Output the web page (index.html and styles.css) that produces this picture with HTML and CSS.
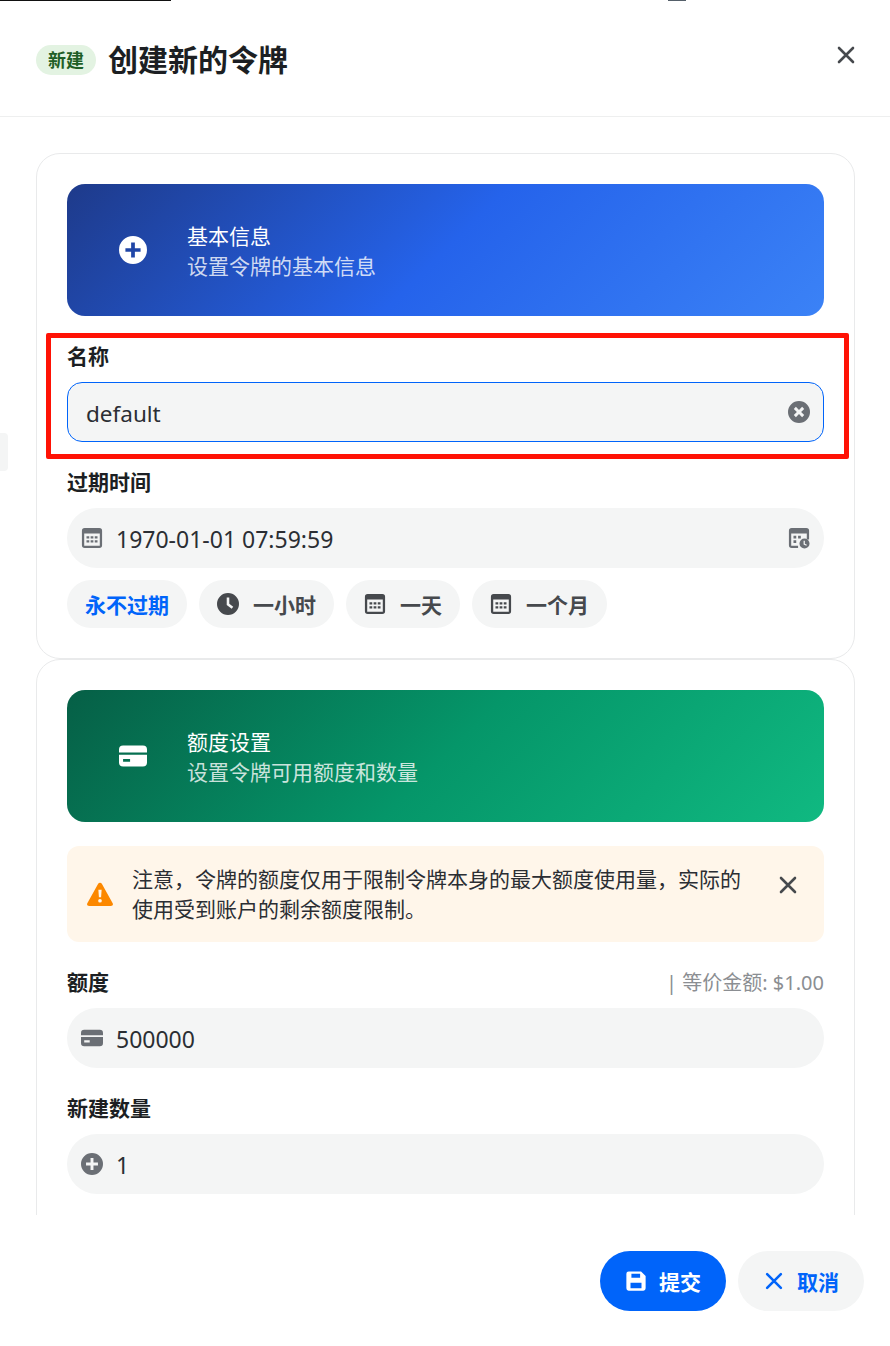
FILE: index.html
```html
<!DOCTYPE html>
<html lang="zh">
<head>
    <meta charset="UTF-8">
    <meta name="viewport" content="width=device-width, initial-scale=1">
    <title>创建新的令牌</title>
    <link rel="stylesheet" href="styles.css">
</head>
<body>

    <!-- page behind the side sheet -->
    <div class="behind-line"></div>
    <div class="behind-mark"></div>
    <div class="behind-tab"></div>

    <div class="sheet">
        <header class="sheet-header">
            <span class="tag-new">新建</span>
            <h1>创建新的令牌</h1>
            <button class="btn-close" type="button" aria-label="关闭">
                <svg viewBox="0 0 24 24" class="icon-close"><path d="M5 5l14 14M19 5L5 19"/></svg>
            </button>
        </header>

        <div class="sheet-body">
            <section class="card">
                <div class="banner banner-blue">
                    <svg viewBox="0 0 24 24" class="banner-icon"><path fill-rule="evenodd" d="M12 0a12 12 0 1 1 0 24a12 12 0 0 1 0-24zM10.400 5.500v4.900H5.500v3.200h4.900v4.900h3.200v-4.900h4.900v-3.200h-4.900V5.500z"/></svg>
                    <div class="banner-text">
                        <div class="banner-title">基本信息</div>
                        <div class="banner-sub">设置令牌的基本信息</div>
                    </div>
                </div>

                <div class="field">
                    <label class="field-label">名称</label>
                    <div class="input-wrap input-focus">
                        <input type="text" value="default">
                        <svg viewBox="0 0 24 24" class="icon-clear"><path fill-rule="evenodd" d="M12 1a11 11 0 1 1 0 22a11 11 0 0 1 0-22zM8.900 6.800L6.800 8.900 9.900 12l-3.100 3.100 2.100 2.100 3.100-3.100 3.100 3.100 2.100-2.100-3.100-3.100 3.100-3.100-2.100-2.100L12 9.900z"/></svg>
                    </div>
                </div>

                <div class="field">
                    <label class="field-label">过期时间</label>
                    <div class="input-wrap">
                        <svg viewBox="0 0 24 24" class="icon-prefix"><use href="#calendar"/></svg>
                        <input type="text" value="1970-01-01 07:59:59">
                        <svg viewBox="0 0 24 24" class="icon-suffix"><path fill-rule="evenodd" d="M4 1h16a3 3 0 0 1 3 3v9.500h-2.500V7h-17v13.500H11V23H4a3 3 0 0 1-3-3V4a3 3 0 0 1 3-3zM6 9.500h3v3H6zM11 9.500h3v3h-3zM6 14.500h3v3H6z"/><path fill-rule="evenodd" d="M18 12.500a5.500 5.500 0 1 1 0 11a5.500 5.500 0 0 1 0-11zM17 15v4l3 1.500.6-1.200-2.200-1.100V15z"/></svg>
                    </div>
                    <div class="chips">
                        <button type="button" class="chip chip-active">永不过期</button>
                        <button type="button" class="chip">
                            <svg viewBox="0 0 24 24"><path fill-rule="evenodd" d="M12 0a12 12 0 1 1 0 24a12 12 0 0 1 0-24zM10.600 5v8l5.400 4.200 1.700-2.200-4.300-3.300V5z"/></svg>
                            一小时
                        </button>
                        <button type="button" class="chip">
                            <svg viewBox="0 0 24 24"><use href="#calendar"/></svg>
                            一天
                        </button>
                        <button type="button" class="chip">
                            <svg viewBox="0 0 24 24"><use href="#calendar"/></svg>
                            一个月
                        </button>
                    </div>
                </div>
            </section>

            <section class="card card-last">
                <div class="banner banner-green">
                    <svg viewBox="0 0 24 24" class="banner-icon"><use href="#creditcard"/></svg>
                    <div class="banner-text">
                        <div class="banner-title">额度设置</div>
                        <div class="banner-sub">设置令牌可用额度和数量</div>
                    </div>
                </div>

                <div class="notice">
                    <svg viewBox="0 0 24 24" class="notice-icon"><path fill-rule="evenodd" d="M12 1.500c.7 0 1.300.4 1.700 1l10 18c.7 1.300-.2 2.500-1.700 2.500H2c-1.500 0-2.400-1.200-1.700-2.500l10-18c.4-.6 1-1 1.700-1zM10.500 8l.5 7h2l.5-7zM12 16.500a1.700 1.700 0 1 0 0 3.400a1.700 1.700 0 0 0 0-3.400z"/></svg>
                    <p>注意，令牌的额度仅用于限制令牌本身的最大额度使用量，实际的使用受到账户的剩余额度限制。</p>
                    <svg viewBox="0 0 24 24" class="icon-close notice-close"><path d="M5 5l14 14M19 5L5 19"/></svg>
                </div>

                <div class="field">
                    <div class="label-row">
                        <label class="field-label">额度</label>
                        <span class="label-extra">| 等价金额: $1.00</span>
                    </div>
                    <div class="input-wrap">
                        <svg viewBox="0 0 24 24" class="icon-prefix"><use href="#creditcard"/></svg>
                        <input type="text" value="500000">
                    </div>
                </div>

                <div class="field">
                    <label class="field-label">新建数量</label>
                    <div class="input-wrap">
                        <svg viewBox="0 0 24 24" class="icon-prefix"><path fill-rule="evenodd" d="M12 0a12 12 0 1 1 0 24a12 12 0 0 1 0-24zM10.400 5.500v4.900H5.500v3.200h4.900v4.900h3.200v-4.900h4.900v-3.200h-4.900V5.500z"/></svg>
                        <input type="text" value="1">
                    </div>
                </div>
            </section>
        </div>

        <footer class="sheet-footer">
            <button type="button" class="btn btn-submit">
                <svg viewBox="0 0 24 24"><path fill-rule="evenodd" d="M4 1.500h13.500l5 5V20a2.500 2.500 0 0 1-2.500 2.500H4A2.500 2.500 0 0 1 1.500 20V4A2.500 2.500 0 0 1 4 1.500zM7 4v4.500h9.500V4zM6 14v6h12v-6z"/></svg>
                提交
            </button>
            <button type="button" class="btn btn-cancel">
                <svg viewBox="0 0 24 24" class="icon-cancel"><path d="M4.500 4.500l15 15M19.500 4.500l-15 15"/></svg>
                取消
            </button>
        </footer>
    </div>

    <!-- annotation drawn over the screenshot -->
    <div class="highlight"></div>

    <svg class="defs" aria-hidden="true">
        <defs>
            <path id="calendar" fill-rule="evenodd" d="M4 1h16a3 3 0 0 1 3 3v16a3 3 0 0 1-3 3H4a3 3 0 0 1-3-3V4a3 3 0 0 1 3-3zM3.500 7v13.500h17V7zM6 10h3v2.500H6zM10.500 10h3v2.500h-3zM15 10h3v2.500h-3zM6 14.500h3V17H6zM10.500 14.500h3V17h-3zM15 14.500h3V17h-3z"/>
            <path id="creditcard" fill-rule="evenodd" d="M3.500 3h17A3.500 3.500 0 0 1 24 6.500V9H0V6.500A3.500 3.500 0 0 1 3.500 3zM0 11h24v6.500a3.500 3.500 0 0 1-3.500 3.500h-17A3.500 3.500 0 0 1 0 17.500zM3.500 14.500V17h6v-2.500z"/>
        </defs>
    </svg>

</body>
</html>
```

FILE: styles.css
```css
* {
    margin: 0;
    padding: 0;
    box-sizing: border-box;
}

html, body {
    height: 100%;
    overflow: hidden;
}

body {
    font-family: "Noto Sans", "Noto Sans CJK SC", sans-serif;
    background: white;
    color: #1c1f23;
    font-size: 21px;
    position: relative;
}

button {
    font-family: inherit;
    border: none;
    cursor: pointer;
}

.defs {
    position: absolute;
    width: 0;
    height: 0;
}

.behind-line {
    position: absolute;
    left: 0;
    top: 0;
    width: 171px;
    height: 1px;
    background: #111;
}

.behind-mark {
    position: absolute;
    left: 668px;
    top: 0;
    width: 18px;
    height: 1px;
    background: #55606a;
}

.behind-tab {
    position: absolute;
    left: 0;
    top: 433px;
    width: 8px;
    height: 38px;
    background: #f4f5f5;
    border-radius: 0 4px 4px 0;
}

.sheet {
    height: 100%;
    display: flex;
    flex-direction: column;
}

.sheet-header {
    height: 117px;
    flex-shrink: 0;
    padding: 3px 36px 0;
    display: flex;
    align-items: center;
    border-bottom: 1px solid #eeefef;
}

.tag-new {
    width: 60px;
    height: 30px;
    line-height: 30px;
    margin-right: 12px;
    text-align: center;
    font-size: 18px;
    font-weight: 700;
    color: #1f5f26;
    background: #e3f3e2;
    border-radius: 15px;
}

.sheet-header h1 {
    flex: 1;
    font-size: 30px;
    line-height: 42px;
    font-weight: 700;
}

.btn-close {
    background: none;
    width: 24px;
    height: 24px;
    margin: 0 -4px 9px 0;
}

.icon-close {
    display: block;
    width: 24px;
    height: 24px;
    fill: none;
    stroke: #46494d;
    stroke-width: 2.6;
    stroke-linecap: round;
}

.sheet-body {
    flex: 1;
    min-height: 0;
    overflow: hidden;
    padding: 36px 35px 0 36px;
}

.card {
    border: 1px solid #e9eaeb;
    border-radius: 24px;
    padding: 30px;
}

.card-last {
    padding-bottom: 80px;
}

.banner {
    height: 132px;
    border-radius: 18px;
    color: white;
    display: flex;
    align-items: center;
    padding-left: 52px;
    gap: 40px;
}

.banner-blue {
    background: linear-gradient(135deg, #1e3a8a, #2563eb 50%, #3b82f6);
}

.banner-green {
    background: linear-gradient(135deg, #065f46, #059669 50%, #10b981);
}

.banner-icon {
    width: 28px;
    height: 28px;
    fill: white;
    flex-shrink: 0;
}

.banner-text {
    padding-top: 2px;
}

.banner-title {
    line-height: 30px;
}

.banner-sub {
    line-height: 30px;
    color: rgba(255, 255, 255, 0.8);
}

.field {
    margin-top: 26px;
}

.field-label {
    display: block;
    line-height: 28px;
    font-weight: 700;
    margin-bottom: 12px;
}

.label-row {
    display: flex;
    justify-content: space-between;
    align-items: center;
}

.label-extra {
    color: #8b8e92;
    margin-bottom: 10px;
    line-height: 30px;
    font-size: 20px;
}

.input-wrap {
    height: 60px;
    border-radius: 30px;
    background: #f4f5f5;
    display: flex;
    align-items: center;
    padding: 0 15px;
    border: 1px solid transparent;
}

.input-wrap input {
    flex: 1;
    min-width: 0;
    border: none;
    outline: none;
    background: none;
    font-family: inherit;
    font-size: 23px;
    color: #2b2e33;
    height: 100%;
    padding-top: 2px;
}

.input-focus {
    border-color: #0064fa;
    border-radius: 15px;
    padding: 0 12px 0 18px;
}

.input-focus input {
    font-size: 22.5px;
}

.icon-clear {
    width: 24px;
    height: 24px;
    fill: #6b6f75;
}

.icon-prefix {
    width: 22px;
    height: 22px;
    margin: 0 13px 0 -2px;
    fill: #6b6f75;
    flex-shrink: 0;
}

.icon-suffix {
    width: 22px;
    height: 22px;
    margin-right: -2px;
    fill: #6b6f75;
    flex-shrink: 0;
}

.chips {
    display: flex;
    gap: 12px;
    margin-top: 12px;
}

.chip {
    height: 48px;
    padding: 0 18px;
    border-radius: 24px;
    background: #f4f5f5;
    color: #46494d;
    font-size: 21px;
    font-weight: 700;
    display: flex;
    align-items: center;
    gap: 14px;
}

.chip svg {
    width: 22px;
    height: 22px;
    fill: #46494d;
}

.chip-active {
    color: #0064fa;
}

.notice {
    margin-top: 24px;
    min-height: 96px;
    background: #fff6ea;
    border-radius: 12px;
    padding: 18px 24px 18px 20px;
    display: flex;
    align-items: center;
}

.notice p {
    flex: 1;
    line-height: 30px;
    color: #2b2e33;
    margin: 0 30px 0 19px;
}

.notice-icon {
    width: 26px;
    height: 26px;
    fill: #fc8800;
    flex-shrink: 0;
}

.notice-close {
    flex-shrink: 0;
    margin-bottom: 18px;
}

.sheet-footer {
    height: 131px;
    flex-shrink: 0;
    padding: 36px 26px 0 0;
    display: flex;
    justify-content: flex-end;
    align-items: flex-start;
    gap: 12px;
}

.btn {
    width: 126px;
    height: 60px;
    border-radius: 30px;
    font-size: 21px;
    font-weight: 700;
    display: flex;
    align-items: center;
    justify-content: center;
    gap: 12px;
}

.btn svg {
    width: 22px;
    height: 22px;
}

.btn-submit {
    background: #0064fa;
    color: white;
}

.btn-submit svg {
    fill: white;
}

.btn-cancel {
    background: #f4f5f5;
    color: #0064fa;
}

.icon-cancel {
    fill: none;
    stroke: #0064fa;
    stroke-width: 2.8;
    stroke-linecap: round;
}

.highlight {
    position: absolute;
    left: 46px;
    top: 333px;
    width: 803px;
    height: 126px;
    border: 5px solid #ff1205;
    border-radius: 2px;
    pointer-events: none;
}
```
